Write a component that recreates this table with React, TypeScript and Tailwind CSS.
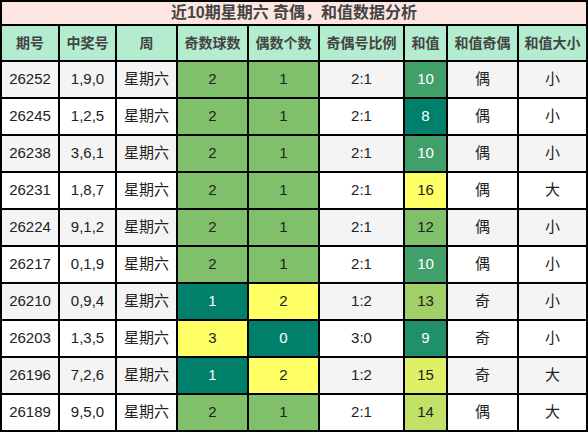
const rows = [
  { id: "26252", nums: "1,9,0", odd: 2, even: 1, ratio: "2:1", sum: 10, sp: "偶", bs: "小" },
  { id: "26245", nums: "1,2,5", odd: 2, even: 1, ratio: "2:1", sum: 8, sp: "偶", bs: "小" },
  { id: "26238", nums: "3,6,1", odd: 2, even: 1, ratio: "2:1", sum: 10, sp: "偶", bs: "小" },
  { id: "26231", nums: "1,8,7", odd: 2, even: 1, ratio: "2:1", sum: 16, sp: "偶", bs: "大" },
  { id: "26224", nums: "9,1,2", odd: 2, even: 1, ratio: "2:1", sum: 12, sp: "偶", bs: "小" },
  { id: "26217", nums: "0,1,9", odd: 2, even: 1, ratio: "2:1", sum: 10, sp: "偶", bs: "小" },
  { id: "26210", nums: "0,9,4", odd: 1, even: 2, ratio: "1:2", sum: 13, sp: "奇", bs: "小" },
  { id: "26203", nums: "1,3,5", odd: 3, even: 0, ratio: "3:0", sum: 9, sp: "奇", bs: "小" },
  { id: "26196", nums: "7,2,6", odd: 1, even: 2, ratio: "1:2", sum: 15, sp: "奇", bs: "大" },
  { id: "26189", nums: "9,5,0", odd: 2, even: 1, ratio: "2:1", sum: 14, sp: "偶", bs: "大" },
];

const headers = ["期号", "中奖号", "周", "奇数球数", "偶数个数", "奇偶号比例", "和值", "和值奇偶", "和值大小"];

// count cells: 0..3 balls
const countStyle: Record<number, string> = {
  0: "bg-[#00806a] text-white",
  1: "bg-[#00806a] text-white",
  2: "bg-[#ffff66] text-[#222]",
  3: "bg-[#ffff66] text-[#222]",
};

const sumStyle: Record<number, string> = {
  8: "bg-[#00806a] text-white",
  9: "bg-[#1f906a] text-white",
  10: "bg-[#41a06a] text-white",
  12: "bg-[#80c06a] text-[#222]",
  13: "bg-[#a1d068] text-[#222]",
  14: "bg-[#c1e066] text-[#222]",
  15: "bg-[#e0f066] text-[#222]",
  16: "bg-[#ffff66] text-[#222]",
};

function oddCls(n: number) {
  return n === 2 ? "bg-[#80c06a] text-[#222]" : countStyle[n];
}

function evenCls(n: number) {
  return n === 1 ? "bg-[#80c06a] text-[#222]" : countStyle[n];
}

export default function App() {
  return (
    <div
      className="w-[588px] h-[432px] bg-black p-[2px] grid grid-cols-[56px_55px_59px_69px_69px_83px_41px_69px_67px] grid-rows-[22px_34px_repeat(10,35px)] gap-[2px] text-[15px] text-[#222]"
      style={{ fontFamily: '"Liberation Sans", Arial, "Noto Sans CJK SC", sans-serif' }}
    >
      <div className="col-span-9 bg-[#fde6e0] flex items-center justify-center text-[16px] font-bold text-[#444]">
        近10期星期六 奇偶，和值数据分析
      </div>
      {headers.map((h) => (
        <div key={h} className="bg-[#b3ecce] flex items-center justify-center text-[14px] font-bold text-[#444]">
          {h}
        </div>
      ))}
      {rows.map((r, i) => {
        const base = i % 2 === 0 ? "bg-[#f4f4f4]" : "bg-white";
        const cell = "flex items-center justify-center";
        return [
          <div key={r.id + "a"} className={`${cell} ${base}`}>{r.id}</div>,
          <div key={r.id + "b"} className={`${cell} ${base}`}>{r.nums}</div>,
          <div key={r.id + "c"} className={`${cell} ${base}`}>星期六</div>,
          <div key={r.id + "d"} className={`${cell} ${oddCls(r.odd)}`}>{r.odd}</div>,
          <div key={r.id + "e"} className={`${cell} ${evenCls(r.even)}`}>{r.even}</div>,
          <div key={r.id + "f"} className={`${cell} ${base}`}>{r.ratio}</div>,
          <div key={r.id + "g"} className={`${cell} ${sumStyle[r.sum]}`}>{r.sum}</div>,
          <div key={r.id + "h"} className={`${cell} ${base}`}>{r.sp}</div>,
          <div key={r.id + "i"} className={`${cell} ${base}`}>{r.bs}</div>,
        ];
      })}
    </div>
  );
}
